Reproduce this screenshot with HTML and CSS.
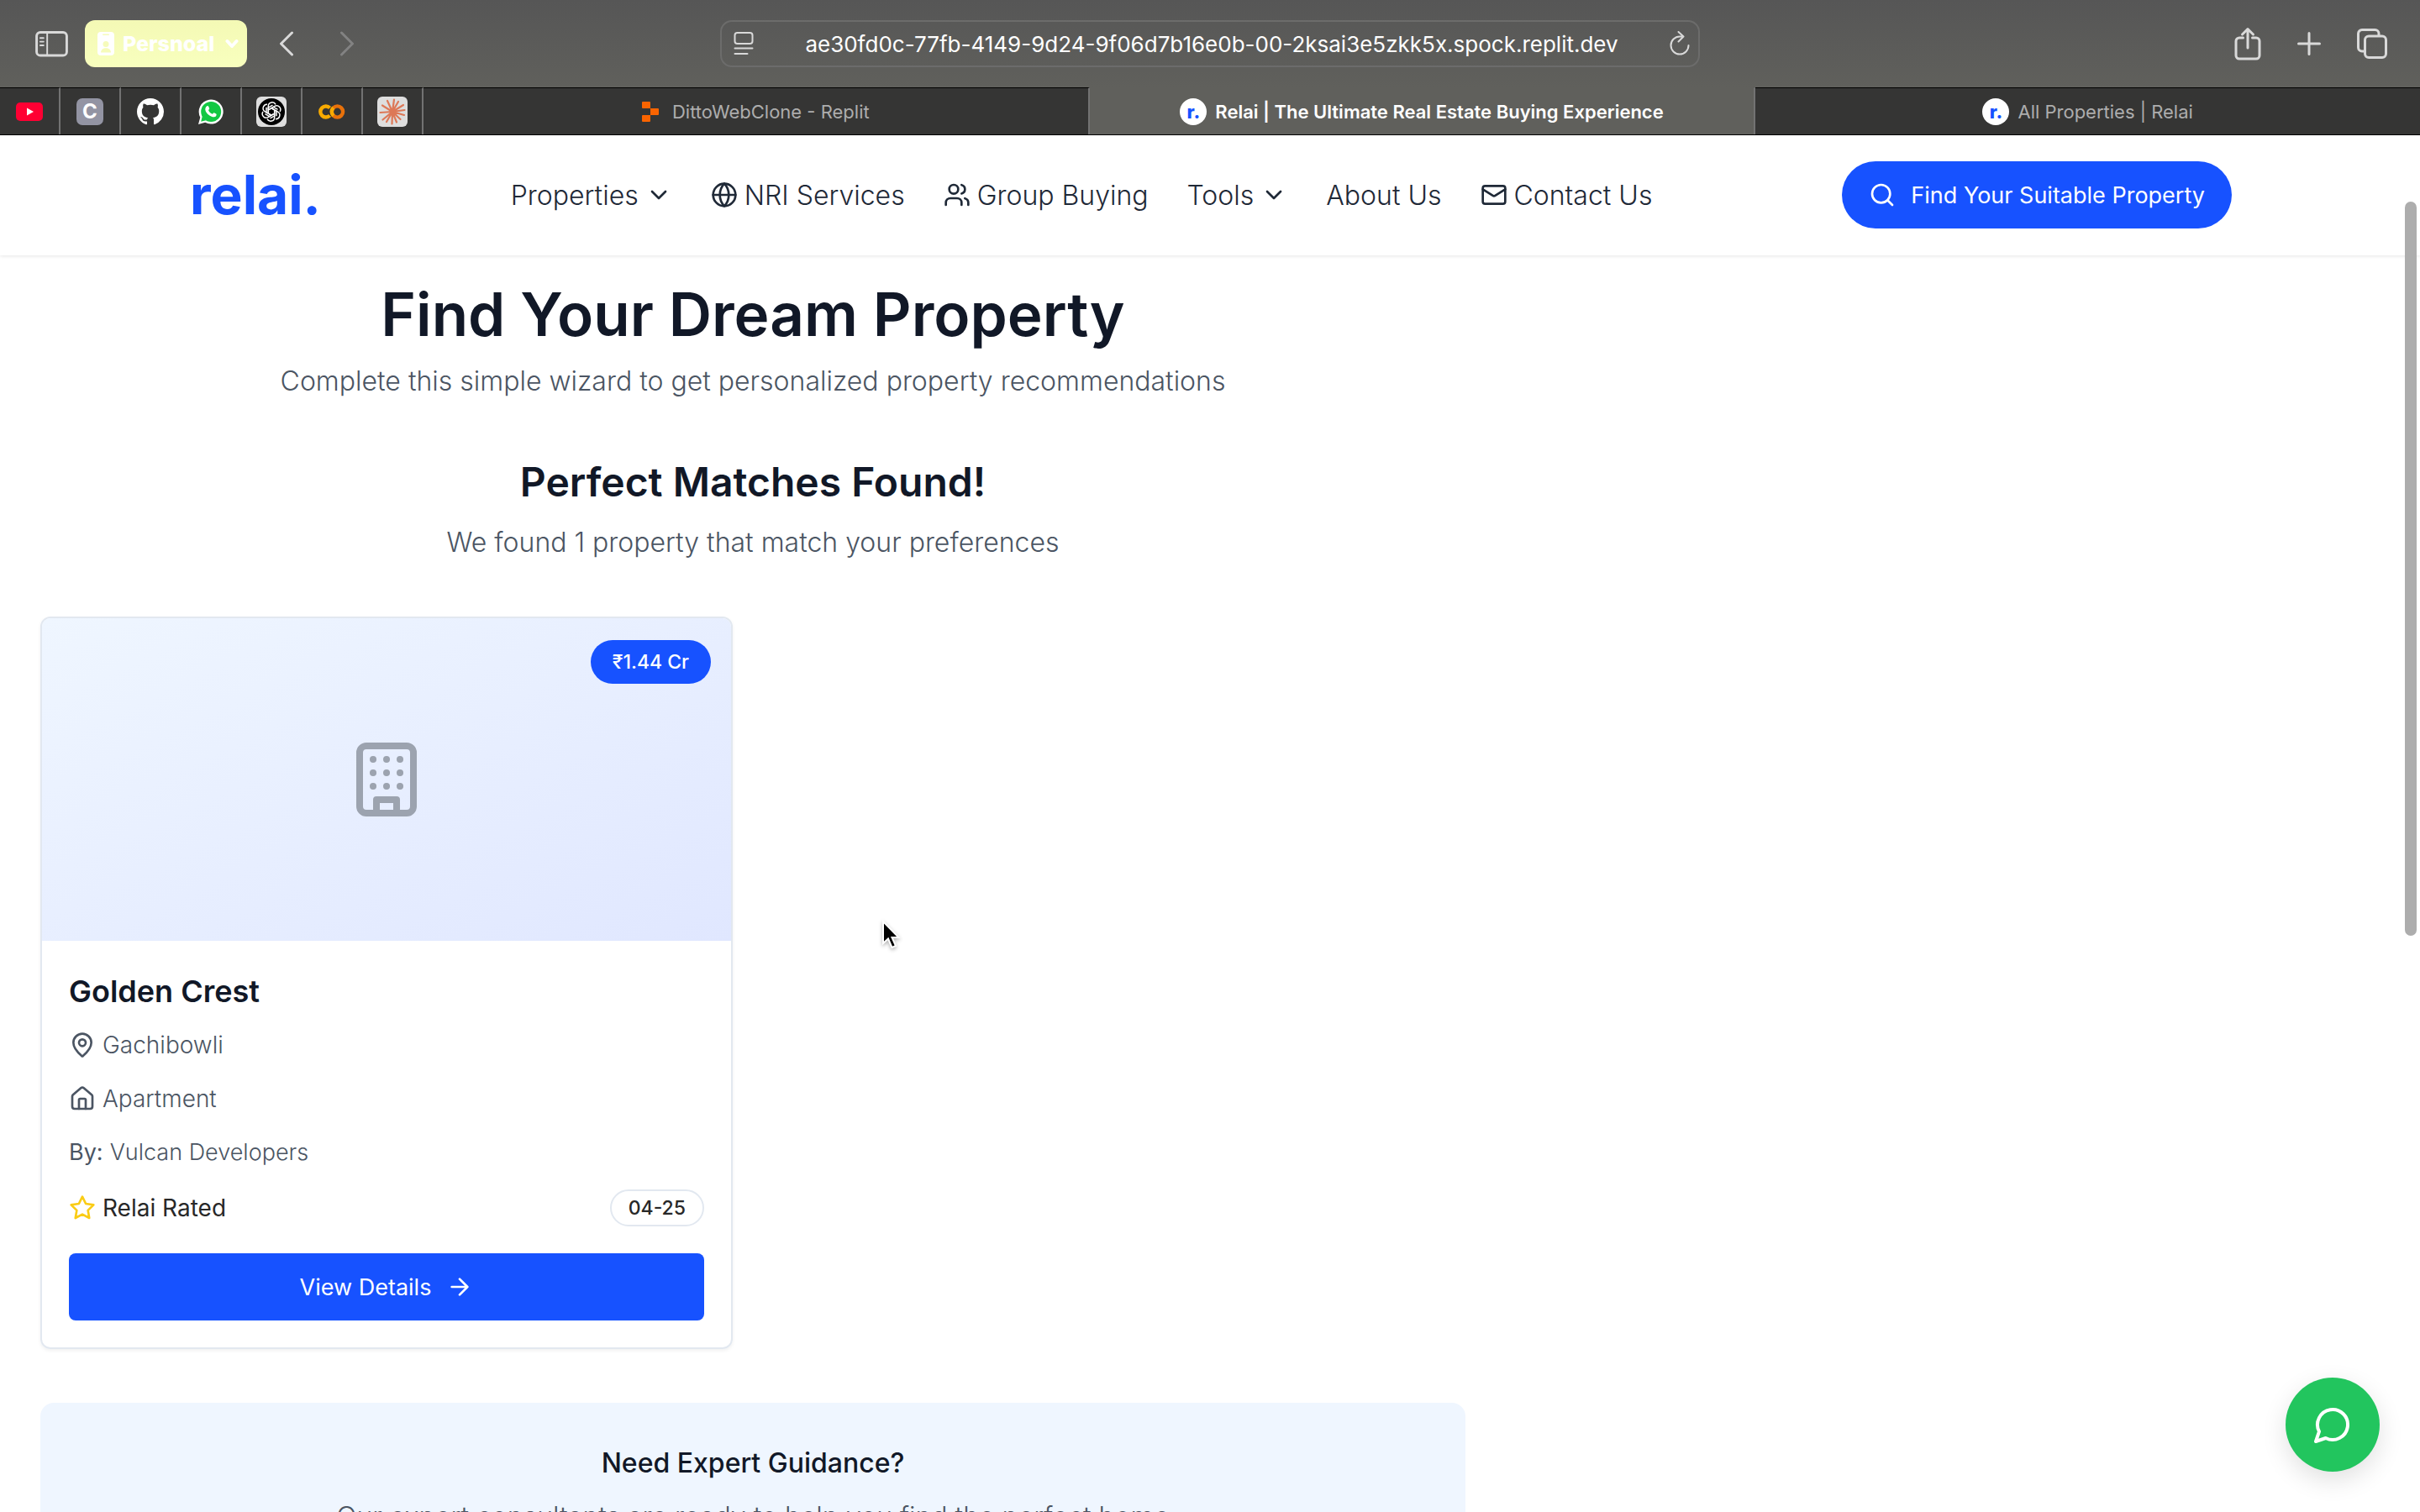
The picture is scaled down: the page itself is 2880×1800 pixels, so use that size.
FILE: index.html
```html
<!DOCTYPE html>
<html lang="en">
<head>
<meta charset="utf-8">
<title>Relai | The Ultimate Real Estate Buying Experience</title>
<link rel="stylesheet" href="styles.css">
</head>
<body>
<svg class="defs" aria-hidden="true">
  <symbol id="chevron" viewBox="0 0 24 24"><path d="m6 9 6 6 6-6"/></symbol>
</svg>
<div class="chrome">
  <div class="toolbar">
    <div class="tools tools-left">
      <button class="tool sidebar" aria-label="Show sidebar"><svg width="39" height="31" viewBox="0 0 40 32"><rect x="1.5" y="1.5" width="37" height="28.500" rx="4.500"/><path d="M14.500 2v28M6 8.500h4M6 13h4M6 17.500h4"/></svg></button>
      <button class="profile"><svg class="badge-icon" width="20" height="28" viewBox="0 0 20 28"><rect width="20" height="28" rx="4" fill="#fff"/><rect x="6" y="2.500" width="8" height="1.500" rx="0.700" fill="#f6fbba"/><circle cx="10" cy="14.500" r="3.500" fill="#f6fbba"/><path d="M4 24.500c0-7 12-7 12 0z" fill="#f6fbba"/></svg><span>Persnoal</span><svg class="drop" width="16" height="12" viewBox="0 0 16 12"><path d="m2.500 3 5.500 6 5.500-6"/></svg></button>
      <button class="tool back" aria-label="Back"><svg width="18" height="30" viewBox="0 0 18 30"><path d="M15.500 2 2.500 15l13 13"/></svg></button>
      <button class="tool forward" aria-label="Forward"><svg width="18" height="30" viewBox="0 0 18 30"><path d="m2.500 2 13 13-13 13"/></svg></button>
    </div>
    <div class="address">
      <svg class="line" width="24" height="30" viewBox="0 0 24 30"><rect x="1.500" y="2" width="21" height="13" rx="3"/><path d="M1.500 20.500h21M1.500 27h15"/></svg>
      <input type="text" aria-label="Address" value="ae30fd0c-77fb-4149-9d24-9f06d7b16e0b-00-2ksai3e5zkk5x.spock.replit.dev">
      <svg class="line" width="24" height="30" viewBox="0 0 24 30"><path d="M14 6.500h-2a10.500 10.500 0 1 0 10.500 10.500M10.500 1l6 5.500-6 6"/></svg>
    </div>
    <div class="tools tools-right">
      <button class="tool" aria-label="Share"><svg width="32" height="40" viewBox="0 0 32 40"><path d="M10.500 13H6a4 4 0 0 0-4 4v17a4 4 0 0 0 4 4h20a4 4 0 0 0 4-4V17a4 4 0 0 0-4-4h-4.500M16 25V3M9.500 9 16 2.500 22.500 9"/></svg></button>
      <button class="tool" aria-label="New tab"><svg width="28" height="28" viewBox="0 0 28 28"><path d="M14 1.500v25M1.500 14h25"/></svg></button>
      <button class="tool" aria-label="Tab overview"><svg width="36" height="36" viewBox="0 0 36 36"><path d="M9.500 27H6a4.500 4.500 0 0 1-4.500-4.500V6A4.500 4.500 0 0 1 6 1.500h15.500A4.500 4.500 0 0 1 26 6v2"/><rect x="9.500" y="9" width="25" height="25.500" rx="4.500"/></svg></button>
    </div>
  </div>
  <div class="tabs">
    <a class="pin" href="#" aria-label="YouTube"><svg width="32" height="22" viewBox="0 0 32 22"><rect width="32" height="22" rx="5" fill="#ff0033"/><path d="M13 6.500v9l8-4.500z" fill="#fff"/></svg></a>
    <a class="pin" href="#"><span class="letter">C</span></a>
    <a class="pin" href="#" aria-label="GitHub"><svg width="32" height="32" viewBox="0 0 16 16"><path fill="#fff" d="M8 0C3.580 0 0 3.580 0 8c0 3.540 2.290 6.530 5.470 7.590.4.070.55-.17.55-.38 0-.19-.01-.82-.01-1.490-2.010.37-2.530-.49-2.690-.94-.09-.23-.48-.94-.82-1.130-.28-.15-.68-.52-.01-.53.63-.01 1.080.58 1.230.82.72 1.210 1.870.87 2.330.66.07-.52.28-.87.51-1.070-1.780-.2-3.640-.89-3.640-3.950 0-.87.31-1.590.82-2.150-.08-.2-.36-1.020.08-2.120 0 0 .67-.21 2.200.82.64-.18 1.320-.27 2-.27s1.360.09 2 .27c1.530-1.040 2.200-.82 2.200-.82.44 1.100.16 1.920.08 2.120.51.56.82 1.270.82 2.150 0 3.070-1.870 3.750-3.650 3.950.29.25.54.73.54 1.480 0 1.070-.01 1.930-.01 2.200 0 .21.15.46.55.38A8.010 8.010 0 0 0 16 8c0-4.420-3.580-8-8-8"/></svg></a>
    <a class="pin" href="#" aria-label="WhatsApp"><svg width="32" height="32" viewBox="0 0 32 32"><path d="M1 31l2.300-8.200A14.500 14.500 0 1 1 9.200 28.800z" fill="#fff"/><circle cx="16.200" cy="16" r="12" fill="#12c843"/><path d="M4.200 27.800l1.500-6 4.500 4.500z" fill="#12c843"/><path d="M11.500 9.200c.8-.4 1.500 0 1.800.8l.9 2.200c.2.600-.9 1.600-1.100 2 .8 2 2.600 3.700 4.700 4.500.6-.3 1.300-1.800 1.900-1.500l2.500 1.200c.8.4.4 1.900 0 2.500-1 1.400-2.700 1.700-4.200 1.300-4.600-1.200-8.200-4.900-8.700-8.600-.2-1.800.9-3.800 2.200-4.400z" fill="#fff"/></svg></a>
    <a class="pin" href="#" aria-label="ChatGPT"><svg width="36" height="36" viewBox="0 0 36 36"><rect width="36" height="36" rx="6" fill="#dedede"/><circle cx="18" cy="18" r="16" fill="#000"/><g fill="none" stroke="#fff" stroke-width="1.500"><path id="petal" d="M14.300 18.500v-7.200a4.600 4.600 0 0 1 8.700-2M14.300 15.900l6-3.500 5.200 3"/><use href="#petal" transform="rotate(60 18 18)"/><use href="#petal" transform="rotate(120 18 18)"/><use href="#petal" transform="rotate(180 18 18)"/><use href="#petal" transform="rotate(240 18 18)"/><use href="#petal" transform="rotate(300 18 18)"/></g></svg></a>
    <a class="pin" href="#" aria-label="Colab"><svg width="32" height="20" viewBox="0 0 32 20"><g fill="none" stroke-width="4.400"><path d="M13.500 14.500a6.500 6.500 0 1 1 0-9" stroke="#f9ab00"/><circle cx="22.500" cy="10" r="6.600" stroke="#e8710a"/><path d="M17.700 14.700a6.600 6.600 0 0 1 0-9.400" stroke="#f9ab00"/></g></svg></a>
    <a class="pin" href="#" aria-label="Claude"><svg width="36" height="36" viewBox="0 0 36 36"><rect width="36" height="36" rx="6" fill="#dedede"/><path d="M18 18 20 3.500M18 18l7-12M18 18 31 10M18 18l14.500-2M18 18l14 4M18 18l9.500 9M18 18l5 12.500M18 18l-.5 14.500M18 18l-7 12M18 18 6.500 27.500M18 18 3.500 19M18 18 6 10.500M18 18 12 5" stroke="#dd7857" stroke-width="2.200" stroke-linecap="round"/></svg></a>
    <a class="tab" href="#"><svg width="20" height="24" viewBox="0 0 20 24"><path d="M1 0h8a1 1 0 0 1 1 1v7H1a1 1 0 0 1-1-1V1a1 1 0 0 1 1-1zM10 8h9a1 1 0 0 1 1 1v6a1 1 0 0 1-1 1h-9zM1 16h9v7a1 1 0 0 1-1 1H1a1 1 0 0 1-1-1v-6a1 1 0 0 1 1-1z" fill="#fa6400"/></svg><span class="wide">DittoWebClone - Replit</span></a>
    <a class="tab active" href="#"><span class="fav">r.</span><span>Relai | The Ultimate Real Estate Buying Experience</span></a>
    <a class="tab" href="#"><span class="fav">r.</span><span>All Properties | Relai</span></a>
  </div>
</div>
<div class="page">
  <header class="header">
    <a class="logo" href="#">relai.</a>
    <nav class="nav">
      <a href="#">Properties<svg class="icon caret"><use href="#chevron"/></svg></a>
      <a href="#"><svg class="icon" viewBox="0 0 24 24"><circle cx="12" cy="12" r="10"/><path d="M12 2a14.500 14.500 0 0 0 0 20 14.500 14.500 0 0 0 0-20M2 12h20"/></svg>NRI Services</a>
      <a href="#"><svg class="icon" viewBox="0 0 24 24"><path d="M16 21v-2a4 4 0 0 0-4-4H6a4 4 0 0 0-4 4v2"/><circle cx="9" cy="7" r="4"/><path d="M22 21v-2a4 4 0 0 0-3-3.870M16 3.130a4 4 0 0 1 0 7.750"/></svg>Group Buying</a>
      <a href="#">Tools<svg class="icon caret"><use href="#chevron"/></svg></a>
      <a href="#">About Us</a>
      <a href="#"><svg class="icon" viewBox="0 0 24 24"><rect width="20" height="16" x="2" y="4" rx="2"/><path d="m22 7-8.970 5.700a1.940 1.940 0 0 1-2.060 0L2 7"/></svg>Contact Us</a>
    </nav>
    <button class="cta"><svg class="icon" viewBox="0 0 24 24"><circle cx="11" cy="11" r="8"/><path d="m21 21-4.300-4.300"/></svg>Find Your Suitable Property</button>
  </header>
  <main class="main">
    <div class="intro">
      <h1>Find Your Dream Property</h1>
      <p>Complete this simple wizard to get personalized property recommendations</p>
    </div>
    <div class="intro">
      <h2>Perfect Matches Found!</h2>
      <p>We found 1 property that match your preferences</p>
    </div>
    <div class="grid">
      <article class="card">
        <div class="photo">
          <svg class="building" viewBox="0 0 24 24"><rect width="16" height="20" x="4" y="2" rx="2"/><path d="M9 22v-4h6v4M8 6h.01M16 6h.01M12 6h.01M12 10h.01M12 14h.01M16 10h.01M16 14h.01M8 10h.01M8 14h.01"/></svg>
          <span class="price">₹1.44 Cr</span>
        </div>
        <div class="details">
          <h3>Golden Crest</h3>
          <p class="fact"><svg class="icon" viewBox="0 0 24 24"><path d="M20 10c0 4.993-5.539 10.193-7.399 11.799a1 1 0 0 1-1.202 0C9.539 20.193 4 14.993 4 10a8 8 0 0 1 16 0"/><circle cx="12" cy="10" r="3"/></svg>Gachibowli</p>
          <p class="fact"><svg class="icon" viewBox="0 0 24 24"><path d="M15 21v-8a1 1 0 0 0-1-1h-4a1 1 0 0 0-1 1v8"/><path d="M3 10a2 2 0 0 1 .709-1.528l7-5.999a2 2 0 0 1 2.582 0l7 5.999A2 2 0 0 1 21 10v9a2 2 0 0 1-2 2H5a2 2 0 0 1-2-2z"/></svg>Apartment</p>
          <p class="fact builder"><b>By:</b>Vulcan Developers</p>
          <div class="rating"><span class="fact rated"><svg class="icon star" viewBox="0 0 24 24"><path d="M12 2l3.090 6.260L22 9.270l-5 4.870 1.180 6.880L12 17.770l-6.180 3.250L7 14.140 2 9.270l6.910-1.010z"/></svg>Relai Rated</span><span class="date">04-25</span></div>
          <button class="view">View Details<svg class="icon" viewBox="0 0 24 24"><path d="M5 12h14M12 5l7 7-7 7"/></svg></button>
        </div>
      </article>
    </div>
    <section class="guidance">
      <h4>Need Expert Guidance?</h4>
      <p>Our expert consultants are ready to help you find the perfect home</p>
    </section>
  </main>
  <div class="scrollbar"></div>
  <button class="chat" aria-label="Chat"><svg viewBox="0 0 24 24"><path d="M7.900 20A9 9 0 1 0 4 16.100L2 22Z"/></svg></button>
  <svg class="cursor" width="24" height="36" viewBox="0 0 24 36"><path d="M2 2v26l6-5.500 4.500 10.500 4.500-2-4.500-10h8z" fill="#000" stroke="#fff" stroke-width="2"/></svg>
</div>
</body>
</html>
```
FILE: styles.css
```css
* { box-sizing: border-box; }
body {
  margin: 0;
  height: 100vh;
  display: flex;
  flex-direction: column;
  overflow: hidden;
  background: #fff;
  font-family: Inter, "Liberation Sans", sans-serif;
  color: #111827;
}
h1, h2, h3, h4, p { margin: 0; }
a { color: inherit; text-decoration: none; }
button { border: 0; padding: 0; background: none; color: inherit; font: inherit; }
svg { flex: none; }
.defs { position: absolute; width: 0; height: 0; }

.chrome {
  flex: none;
  background: linear-gradient(#565656, #60605c 104px);
  border-bottom: 1px solid #000;
}
.toolbar {
  height: 104px;
  display: grid;
  grid-template-columns: 1fr 1166px 1fr;
  align-items: center;
}
.tools { display: flex; align-items: center; }
.tools-left { padding-left: 42px; }
.tools-right { justify-content: flex-end; gap: 43px; padding-right: 39px; }
.tool { display: flex; }
.tool svg, .line { fill: none; stroke: #d9d9d9; stroke-width: 3; stroke-linecap: round; stroke-linejoin: round; }
.sidebar path { stroke-width: 2; }
.back { margin-left: 38px; }
.forward { margin-left: 54px; }
.forward svg { stroke: #828282; }
.profile {
  display: flex;
  align-items: center;
  height: 56px;
  margin-left: 20px;
  padding: 0 10px 0 15px;
  border-radius: 12px;
  background: linear-gradient(#f4f9b5, #f8ffbe);
  color: #fff;
  font-size: 25px;
  font-weight: 800;
}
.profile span { margin: 0 13px 0 10px; }
.drop { fill: none; stroke: #fff; stroke-width: 4; stroke-linecap: round; stroke-linejoin: round; }
.address {
  display: flex;
  align-items: center;
  height: 56px;
  padding: 0 10px 0 14px;
  border: 2px solid #6c6c6b;
  border-radius: 14px;
}
.address input {
  flex: 1;
  min-width: 0;
  border: 0;
  background: none;
  color: #fff;
  text-align: center;
  font: 400 26px Inter, sans-serif;
}
.line { stroke-width: 2; }
.tabs { display: flex; height: 56px; }
.pin, .tab {
  display: flex;
  align-items: center;
  justify-content: center;
  border-top: 1px solid #000;
  border-right: 2px solid #727272;
  background: #353534;
}
.pin { flex: none; width: 72px; }
.tab { flex: 1; box-sizing: content-box; height: 55px; gap: 10px; color: #adadad; font-size: 22px; }
.tab .wide { margin-left: 6px; }
.tab:last-child { border-right: 0; }
.active { border-top-color: transparent; background: none; color: #fff; font-weight: 600; }
.letter {
  width: 32px;
  border-radius: 7px;
  background: #9394a3;
  color: #fff;
  text-align: center;
  font-size: 24px;
  font-weight: 700;
  line-height: 32px;
}
.fav {
  width: 32px;
  border-radius: 50%;
  background: #fff;
  color: #1752ff;
  text-align: center;
  font-size: 22px;
  font-weight: 800;
  line-height: 32px;
}

.page { position: relative; flex: 1; min-height: 0; overflow: hidden; }
.header {
  display: flex;
  align-items: center;
  justify-content: space-between;
  padding: 31px 224px 32px;
  box-shadow: 0 1px 4px rgba(0, 0, 0, .1);
}
.logo { padding-left: 2px; color: #1752ff; font-size: 64px; font-weight: 700; line-height: 80px; }
.nav { display: flex; gap: 46px; color: #1f2937; font-size: 32px; font-weight: 300; }
.nav a { display: flex; align-items: center; gap: 8px; }
.icon { width: 32px; height: 32px; fill: none; stroke: currentColor; stroke-width: 2; stroke-linecap: round; stroke-linejoin: round; }
.cta {
  display: flex;
  align-items: center;
  gap: 18px;
  height: 80px;
  padding: 0 32px;
  border-radius: 40px;
  background: #1752ff;
  color: #fff;
  font-size: 27px;
}

.main {
  display: flex;
  flex-direction: column;
  gap: 64px;
  max-width: 1792px;
  padding: 30px 48px;
}
.intro { display: flex; flex-direction: column; gap: 16px; text-align: center; }
h1 { font-size: 71px; line-height: 80px; font-weight: 600; }
h2 { font-size: 48px; line-height: 64px; font-weight: 600; }
.intro p, .guidance p { color: #4b5563; font-size: 32px; line-height: 48px; font-weight: 300; }
.grid { display: grid; grid-template-columns: 1fr 1fr; gap: 48px; }
.card {
  overflow: hidden;
  border: 2px solid #e2e8f0;
  border-radius: 12px;
  box-shadow: 0 2px 4px rgba(0, 0, 0, .06);
}
.photo {
  position: relative;
  display: flex;
  align-items: center;
  justify-content: center;
  height: 384px;
  background: linear-gradient(to bottom right, #eff6ff, #e0e7ff);
}
.building { width: 96px; height: 96px; fill: none; stroke: #9ca3af; stroke-width: 2; stroke-linecap: round; stroke-linejoin: round; }
.price {
  position: absolute;
  top: 26px;
  right: 24px;
  padding: 0 26px;
  border-radius: 26px;
  background: #1752ff;
  color: #fff;
  font-size: 23px;
  font-weight: 500;
  line-height: 52px;
}
.details { display: flex; flex-direction: column; gap: 24px; padding: 32px; }
h3 { margin-bottom: -8px; font-size: 36px; line-height: 56px; font-weight: 600; }
.fact { display: flex; align-items: center; gap: 8px; color: #4b5563; font-size: 28px; line-height: 40px; font-weight: 300; }
.builder { font-size: 27px; }
.fact b { font-weight: 400; }
.rating { display: flex; align-items: center; justify-content: space-between; }
.rated { color: #282828; font-weight: 400; }
.star { stroke: #facc15; }
.date {
  padding: 0 20px;
  border: 2px solid #e2e8f0;
  border-radius: 22px;
  color: #282828;
  font-size: 23px;
  font-weight: 500;
  line-height: 40px;
}
.view {
  display: flex;
  align-items: center;
  justify-content: center;
  gap: 18px;
  height: 80px;
  margin-top: 8px;
  border-radius: 8px;
  background: #1752ff;
  color: #fff;
  font-size: 27px;
}
.guidance {
  display: flex;
  flex-direction: column;
  gap: 16px;
  padding: 48px;
  border-radius: 16px;
  background: #eff6ff;
  text-align: center;
}
h4 { font-size: 32px; line-height: 48px; font-weight: 500; }

.scrollbar { position: absolute; top: 79px; right: 4px; width: 14px; height: 874px; border-radius: 7px; background: #adadad; }
.chat {
  position: absolute;
  right: 48px;
  bottom: 48px;
  display: flex;
  align-items: center;
  justify-content: center;
  width: 112px;
  height: 112px;
  border-radius: 50%;
  background: #22c55e;
  box-shadow: 0 10px 30px rgba(0, 0, 0, .12);
}
.chat svg { width: 48px; height: 48px; fill: none; stroke: #fff; stroke-width: 2; stroke-linecap: round; stroke-linejoin: round; }
.cursor { position: absolute; left: 1049px; top: 934px; filter: drop-shadow(0 2px 2px rgba(0, 0, 0, .3)); }
```
